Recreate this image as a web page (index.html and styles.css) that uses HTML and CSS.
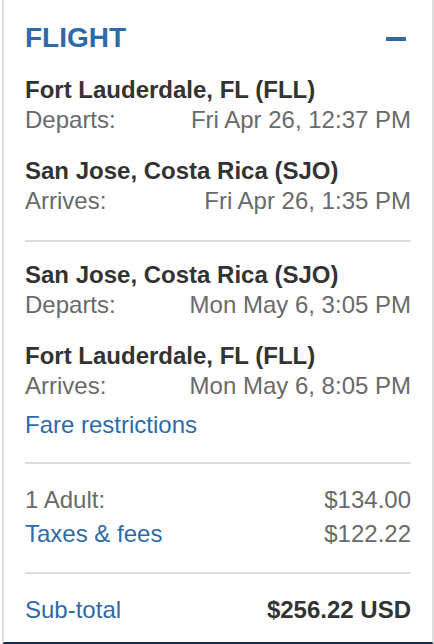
FILE: index.html
```html
<!DOCTYPE html>
<html lang="en">
<head>
    <meta charset="UTF-8">
    <meta name="viewport" content="width=device-width, initial-scale=1.0">
    <title>Flight summary</title>
    <link rel="stylesheet" href="styles.css">
</head>
<body>
    <div class="summary-card">
        <div class="summary-header">
            <h1>FLIGHT</h1>
            <span class="collapse-icon"></span>
        </div>

        <!-- Outbound -->
        <div class="leg">
            <div class="stop">
                <div class="city">Fort Lauderdale, FL (FLL)</div>
                <div class="row"><span>Departs:</span><span>Fri Apr 26, 12:37 PM</span></div>
            </div>
            <div class="stop">
                <div class="city">San Jose, Costa Rica (SJO)</div>
                <div class="row"><span>Arrives:</span><span>Fri Apr 26, 1:35 PM</span></div>
            </div>
        </div>

        <!-- Return -->
        <div class="leg leg-last">
            <div class="stop">
                <div class="city">San Jose, Costa Rica (SJO)</div>
                <div class="row"><span>Departs:</span><span>Mon May 6, 3:05 PM</span></div>
            </div>
            <div class="stop">
                <div class="city">Fort Lauderdale, FL (FLL)</div>
                <div class="row"><span>Arrives:</span><span>Mon May 6, 8:05 PM</span></div>
            </div>
            <a class="link fare-link" href="#">Fare restrictions</a>
        </div>

        <div class="prices">
            <div class="row"><span>1 Adult:</span><span>$134.00</span></div>
            <div class="row"><a class="link" href="#">Taxes &amp; fees</a><span>$122.22</span></div>
        </div>

        <div class="total">
            <div class="row"><a class="link" href="#">Sub-total</a><span class="total-amount">$256.22 USD</span></div>
        </div>
    </div>
</body>
</html>
```

FILE: styles.css
```css
body {
    margin: 0;
    padding: 0;
    background-color: #fff;
    font-family: "Liberation Sans", Arial, sans-serif;
    color: #333;
}

.summary-card {
    margin-left: 2px;
    border-left: 2px solid #ddd;
    border-right: 2px solid #ddd;
    border-bottom: 3px solid #0d2a5a;
    padding: 21px 21px 17px;
}

.summary-header {
    display: flex;
    justify-content: space-between;
    align-items: center;
    margin-bottom: 20px;
}

.summary-header h1 {
    margin: 0;
    font-size: 28px;
    line-height: 34px;
    color: #2f6aa8;
}

.collapse-icon {
    display: block;
    width: 20px;
    height: 4px;
    margin: 2px 5px 0 0;
    background-color: #2f6aa8;
}

.leg {
    padding-bottom: 24px;
    border-bottom: 2px solid #ddd;
    margin-bottom: 18px;
}

.leg-last {
    padding-bottom: 22px;
}

.stop + .stop {
    margin-top: 21px;
}

.city {
    font-weight: bold;
    font-size: 24px;
    line-height: 30px;
    color: #333;
}

.row {
    display: flex;
    justify-content: space-between;
    font-size: 24px;
    line-height: 30px;
    color: #6a6a6a;
}

.link {
    display: block;
    color: #2f6aa8;
    text-decoration: none;
}

.fare-link {
    margin-top: 9px;
    font-size: 24px;
    line-height: 30px;
}

.prices {
    padding-top: 3px;
    padding-bottom: 23px;
    border-bottom: 2px solid #ddd;
    margin-bottom: 21px;
}

.prices .row + .row {
    margin-top: 4px;
}

.total-amount {
    font-weight: bold;
    color: #333;
}
```
